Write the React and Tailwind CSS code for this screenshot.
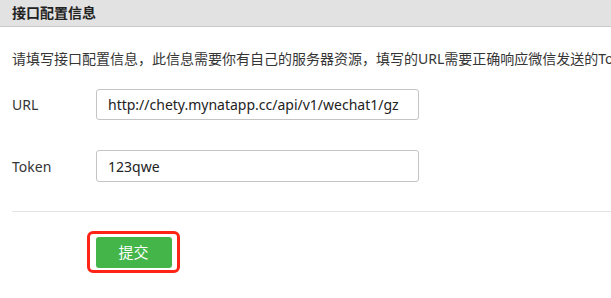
import React, { useState } from "react";

const App = () => {
  const [url, setUrl] = useState("http://chety.mynatapp.cc/api/v1/wechat1/gz");
  const [token, setToken] = useState("123qwe");

  return (
    <div className="w-[611px] h-[298px] bg-white overflow-hidden text-[#353535] font-['Noto_Sans','Noto_Sans_CJK_SC',sans-serif]">
      <div className="h-[27px] bg-[#e2e2e2] border-b border-[#c9c9c9] pl-3 flex items-center">
        <h2 className="text-[14px] font-bold text-[#222] leading-none">接口配置信息</h2>
      </div>

      <p className="mt-[22px] pl-3 text-[14px] leading-5 whitespace-nowrap">
        请填写接口配置信息，此信息需要你有自己的服务器资源，填写的URL需要正确响应微信发送的Token验证
      </p>

      <div className="mt-[20px] pl-3 flex items-center">
        <label className="w-[84px] text-[14px]">URL</label>
        <input
          value={url}
          onChange={(e) => setUrl(e.target.value)}
          className="w-[323px] h-[31px] border border-[#c4c4c4] rounded-[3px] px-[11px] text-[14px] text-[#222] outline-none"
        />
      </div>

      <div className="mt-[30px] pl-3 flex items-center">
        <label className="w-[84px] text-[14px]">Token</label>
        <input
          value={token}
          onChange={(e) => setToken(e.target.value)}
          className="w-[323px] h-[32px] border border-[#c4c4c4] rounded-[3px] px-[11px] text-[14px] text-[#222] outline-none"
        />
      </div>

      <div className="mt-[29px] ml-3 border-t border-[#e4e4e4]" />

      <div className="mt-[19px] ml-[87px] w-[93px] h-[42px] border-[3px] border-[#ff2415] rounded-[6px] flex items-center justify-center">
        <button className="w-[76px] h-[31px] bg-[#44b549] rounded-[3px] text-white text-[15px]">
          提交
        </button>
      </div>
    </div>
  );
};

export default App;
